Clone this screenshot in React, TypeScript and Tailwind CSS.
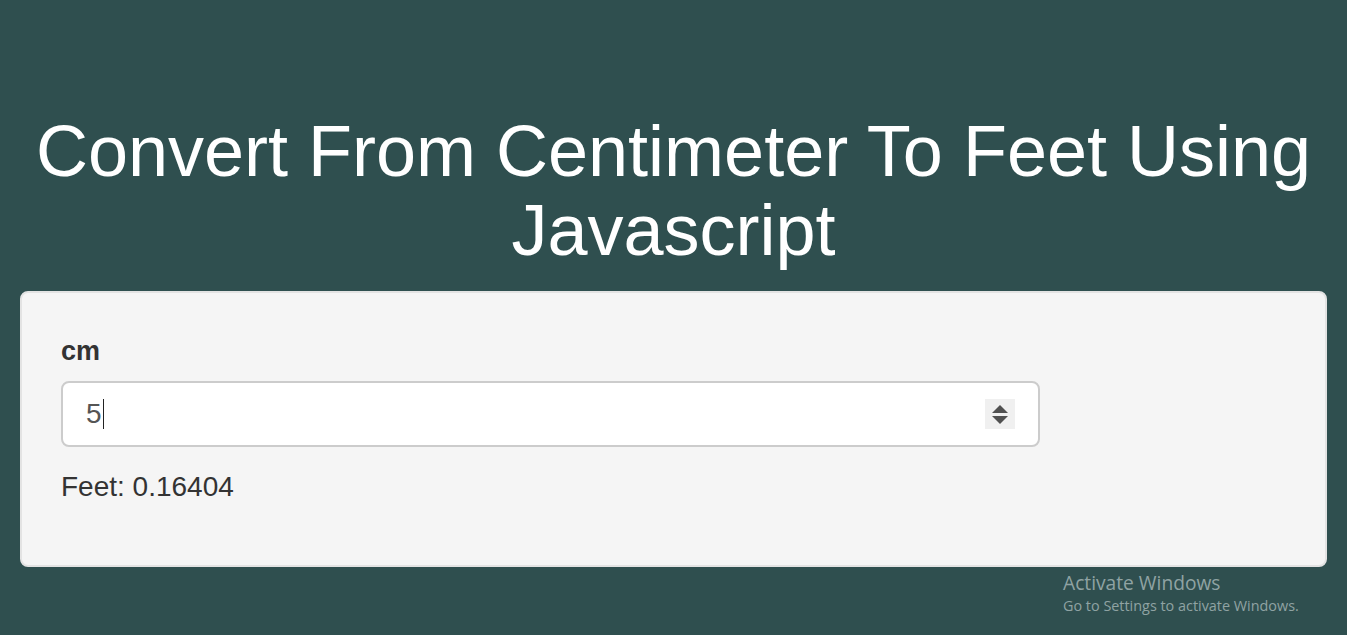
import React from "react";

const Spinner = () => {
  return (
    <div className="flex h-[30px] w-[30px] flex-col items-center justify-center gap-[3px] bg-[#f0f0f0]">
      <svg width="16" height="8" viewBox="0 0 16 8">
        <path d="M8 0 L16 8 L0 8 Z" fill="#505050" />
      </svg>
      <svg width="16" height="8" viewBox="0 0 16 8">
        <path d="M0 0 L16 0 L8 8 Z" fill="#505050" />
      </svg>
    </div>
  );
};

export default function App() {
  return (
    <div className="relative min-h-[635px] bg-[#2f4f4f] px-[20px] pt-[112px] font-['Liberation_Sans',Arial,sans-serif]">
      {/* title */}
      <h1 className="mb-[21px] text-center text-[72px] font-normal leading-[79px] text-white">
        Convert From Centimeter To Feet Using Javascript
      </h1>

      {/* well */}
      <div className="rounded-[8px] border-2 border-[#e3e3e3] bg-[#f5f5f5] px-[39px] pb-[38px] pt-[38px] text-[#333]">
        <label className="mb-[10px] block text-[27px] font-bold leading-[40px]">
          cm
        </label>
        <div className="flex h-[66px] w-[979px] items-center justify-between rounded-[8px] border-2 border-[#ccc] bg-white pl-[23px] pr-[23px]">
          <div className="flex items-center text-[28px] text-[#555]">
            <span>5</span>
            <span className="ml-[1px] h-[30px] w-[1px] bg-[#222]" />
          </div>
          <Spinner />
        </div>
        <p className="mb-[20px] mt-[20px] text-[28px] leading-[40px]">Feet: 0.16404</p>
      </div>

      {/* watermark */}
      <div className="absolute left-[1063px] top-[571px] font-['Open_Sans',sans-serif] text-[#8fa3a3]">
        <div className="text-[19.2px] leading-[24px]">Activate Windows</div>
        <div className="text-[14.4px] leading-[21px]">Go to Settings to activate Windows.</div>
      </div>
    </div>
  );
}
